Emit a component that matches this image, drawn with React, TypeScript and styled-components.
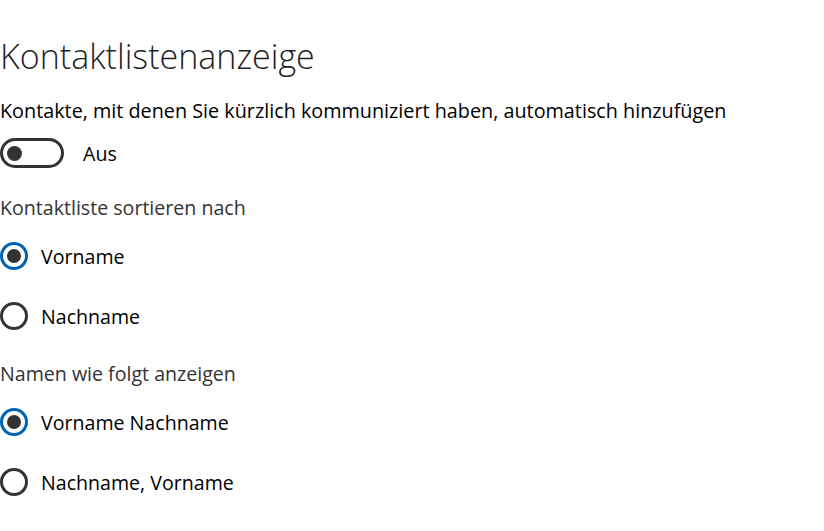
import * as React from 'react';
import styled, {createGlobalStyle} from 'styled-components';

const GlobalStyle = createGlobalStyle`
	html, body {
		margin: 0;
		padding: 0;
		background: #ffffff;
	}
	body {
		font-family: "Open Sans", "Noto Sans", sans-serif;
		color: #000000;
	}
`;

const Page = styled.div`
	display: flex;
	flex-direction: column;
	align-items: flex-start;
	width: 824px;
	height: 531px;
	overflow: hidden;
`;

const Title = styled.h1`
	margin: 32px 0 0 0;
	font-size: 34px;
	font-weight: 300;
	line-height: 48px;
	color: #1f1f1f;
	white-space: nowrap;
`;

const Description = styled.div`
	margin-top: 17px;
	font-size: 19.8px;
	line-height: 28px;
	white-space: nowrap;
`;

const SectionLabel = styled.div<{$gap: number}>`
	margin-top: ${p => p.$gap}px;
	font-size: 19.6px;
	line-height: 28px;
	color: #333333;
	white-space: nowrap;
`;

const ToggleRow = styled.label`
	display: flex;
	align-items: center;
	gap: 19px;
	height: 30px;
	margin-top: 13px;
	font-size: 19.6px;
`;

const ToggleTrack = styled.span<{$on: boolean}>`
	box-sizing: border-box;
	display: flex;
	align-items: center;
	justify-content: ${p => p.$on ? 'flex-end' : 'flex-start'};
	width: 64px;
	height: 30px;
	padding: 0 4px;
	border: 3px solid #333333;
	border-radius: 15px;
	background: ${p => p.$on ? '#0063b1' : '#ffffff'};
`;

const ToggleKnob = styled.span`
	width: 15px;
	height: 15px;
	border-radius: 50%;
	background: #333333;
`;

const RadioGroup = styled.div`
	display: flex;
	flex-direction: column;
	gap: 20px;
	margin-top: 14px;
`;

const RadioRow = styled.label`
	display: flex;
	align-items: center;
	gap: 13px;
	height: 40px;
	font-size: 19.6px;
	white-space: nowrap;
`;

const RadioCircle = styled.span<{$checked: boolean}>`
	box-sizing: border-box;
	display: flex;
	align-items: center;
	justify-content: center;
	width: 28px;
	height: 28px;
	border: 3px solid ${p => p.$checked ? '#0063b1' : '#333333'};
	border-radius: 50%;
	&::after {
		content: '';
		display: ${p => p.$checked ? 'block' : 'none'};
		width: 14px;
		height: 14px;
		border-radius: 50%;
		background: #333333;
	}
`;

const Radio: React.FC<{label: string; checked?: boolean}> = ({label, checked}) => (
	<RadioRow>
		<RadioCircle $checked={!!checked} />
		<span>{label}</span>
	</RadioRow>
);

const sortOptions = [
	{label: 'Vorname', checked: true},
	{label: 'Nachname', checked: false},
];

const displayOptions = [
	{label: 'Vorname Nachname', checked: true},
	{label: 'Nachname, Vorname', checked: false},
];

export default function App() {
	return (
		<>
			<GlobalStyle />
			<Page>
				<Title>Kontaktlistenanzeige</Title>
				<Description>Kontakte, mit denen Sie kürzlich kommuniziert haben, automatisch hinzufügen</Description>
				<ToggleRow>
					<ToggleTrack $on={false}>
						<ToggleKnob />
					</ToggleTrack>
					<span>Aus</span>
				</ToggleRow>
				<SectionLabel $gap={26}>Kontaktliste sortieren nach</SectionLabel>
				<RadioGroup>
					{sortOptions.map(o => <Radio key={o.label} label={o.label} checked={o.checked} />)}
				</RadioGroup>
				<SectionLabel $gap={24}>Namen wie folgt anzeigen</SectionLabel>
				<RadioGroup>
					{displayOptions.map(o => <Radio key={o.label} label={o.label} checked={o.checked} />)}
				</RadioGroup>
			</Page>
		</>
	);
}
